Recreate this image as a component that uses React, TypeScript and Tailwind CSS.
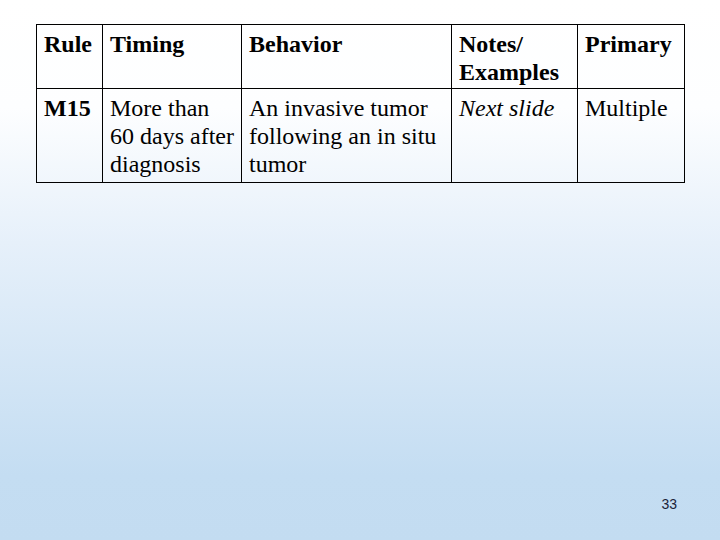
export default function App() {
  return (
    <div className="w-[720px] h-[540px] flex flex-col bg-[linear-gradient(to_bottom,#ffffff_0%,#fdfeff_20%,#e6f0fa_45%,#c4ddf2_88%,#c3dcf1_100%)] font-['Liberation_Serif',serif] text-black">
      {/* Table */}
      <div className="pt-[24px] pl-[36px]">
        <table className="table-fixed border-collapse w-[648px] text-[24px] leading-[28px]">
          <colgroup>
            <col className="w-[66px]" />
            <col className="w-[139px]" />
            <col className="w-[210px]" />
            <col className="w-[126px]" />
            <col className="w-[107px]" />
          </colgroup>
          <thead>
            <tr className="h-[64px]">
              <th className="border border-black align-top text-left font-bold px-[7px] pt-[5px]">Rule</th>
              <th className="border border-black align-top text-left font-bold px-[7px] pt-[5px]">Timing</th>
              <th className="border border-black align-top text-left font-bold px-[7px] pt-[5px]">Behavior</th>
              <th className="border border-black align-top text-left font-bold px-[7px] pt-[5px] whitespace-nowrap">
                Notes/
                <br />
                Examples
              </th>
              <th className="border border-black align-top text-left font-bold px-[7px] pt-[5px]">Primary</th>
            </tr>
          </thead>
          <tbody>
            <tr className="h-[94px]">
              <td className="border border-black align-top font-bold px-[7px] pt-[5px]">M15</td>
              <td className="border border-black align-top px-[7px] pt-[5px] whitespace-nowrap">
                More than
                <br />
                60 days after
                <br />
                diagnosis
              </td>
              <td className="border border-black align-top px-[7px] pt-[5px] whitespace-nowrap">
                An invasive tumor
                <br />
                following an in situ
                <br />
                tumor
              </td>
              <td className="border border-black align-top px-[7px] pt-[5px] italic whitespace-nowrap">Next slide</td>
              <td className="border border-black align-top px-[7px] pt-[5px]">Multiple</td>
            </tr>
          </tbody>
        </table>
      </div>

      {/* Slide number */}
      <div className="mt-auto flex justify-end pr-[43px] pb-[28px]">
        <span className="font-['Liberation_Sans',sans-serif] text-[14px] leading-[16px] text-[#1b1f3a]">33</span>
      </div>
    </div>
  );
}
